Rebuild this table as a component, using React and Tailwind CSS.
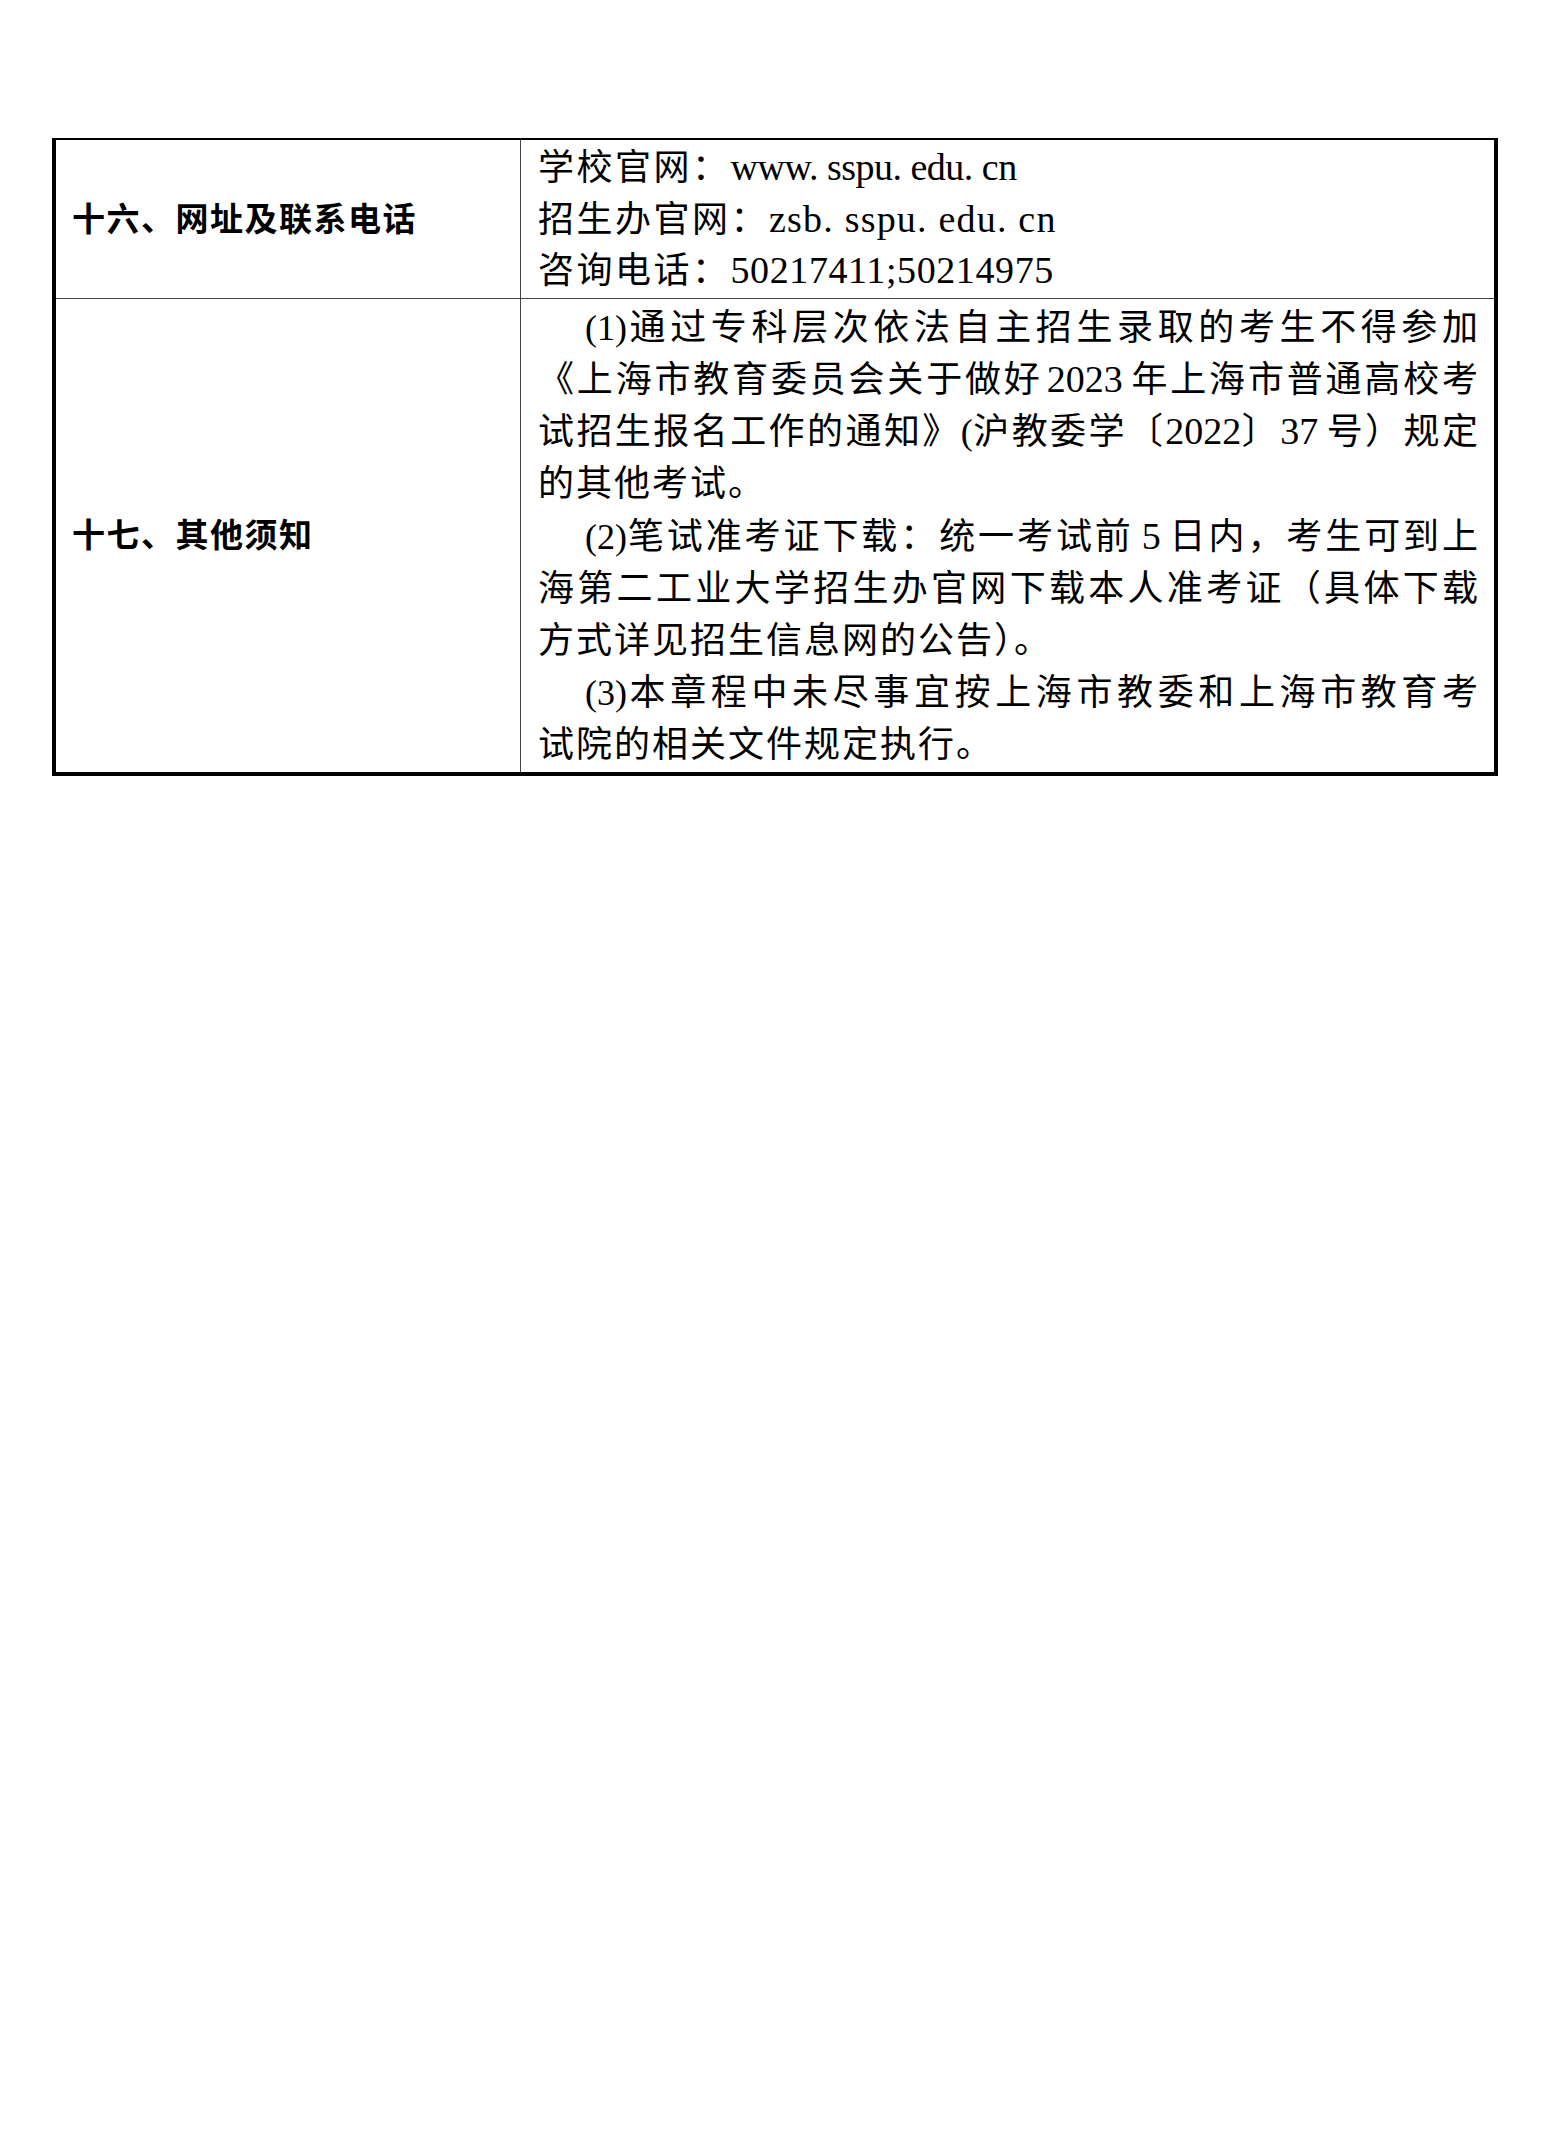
export default function App() {
  const full = "text-justify [text-align-last:justify]";
  const L = "text-[38px] leading-none";
  return (
    <div className="min-h-[2140px] w-[1551px] bg-white pt-[138px] pl-[52px] font-['Liberation_Serif','Noto_Sans_CJK_SC',serif] text-black">
      <div className="w-[1446px] border-t-2 border-l-4 border-r-4 border-b-4 border-black">
        <div className="flex border-b border-[#444]">
          <div className="w-[465px] shrink-0 border-r border-[#444] flex items-center pl-[16px] pt-[4px] text-[33px] font-bold tracking-[1.5px]">
            十六、网址及联系电话
          </div>
          <div className="flex-1 pl-[17px] pr-[14px] pt-[3px] text-[36px] leading-[51.6px]">
            <div>
              <span className="tracking-[2.5px]">学校官网：</span>
              <span className={`${L} tracking-[-0.5px]`}>www. sspu. edu. cn</span>
            </div>
            <div>
              <span className="tracking-[2.5px]">招生办官网：</span>
              <span className={`${L} tracking-[1.2px]`}>zsb. sspu. edu. cn</span>
            </div>
            <div>
              <span className="tracking-[2.5px]">咨询电话：</span>
              <span className={`${L} tracking-[0.6px]`}>50217411;50214975</span>
            </div>
          </div>
        </div>
        <div className="flex">
          <div className="w-[465px] shrink-0 border-r border-[#444] flex items-center pl-[16px] pt-[4px] text-[33px] font-bold tracking-[1.5px]">
            十七、其他须知
          </div>
          <div className="flex-1 pl-[17px] pr-[14px] pt-[3px] text-[36px] leading-[52.2px] tracking-[2px]">
            <div className={`${full} pl-[47px]`}>
              <span className="tracking-normal">(1)</span>通过专科层次依法自主招生录取的考生不得参加
            </div>
            <div className={full}>
              《上海市教育委员会关于做好<span className={`${L} tracking-normal ml-[4px] mr-[8px]`}>2023</span>年上海市普通高校考
            </div>
            <div className={full}>
              试招生报名工作的通知》<span className="tracking-normal">(</span>沪教委学〔<span className={`${L} tracking-normal`}>2022</span>〕<span className={`${L} tracking-normal mr-[8px]`}>37</span>号）规定
            </div>
            <div>的其他考试。</div>
            <div className={`${full} pl-[47px]`}>
              <span className="tracking-normal">(2)</span>笔试准考证下载：统一考试前<span className={`${L} tracking-normal mx-[8px]`}>5</span>日内，考生可到上
            </div>
            <div className={full}>海第二工业大学招生办官网下载本人准考证（具体下载</div>
            <div>方式详见招生信息网的公告）。</div>
            <div className={`${full} pl-[47px]`}>
              <span className="tracking-normal">(3)</span>本章程中未尽事宜按上海市教委和上海市教育考
            </div>
            <div>试院的相关文件规定执行。</div>
          </div>
        </div>
      </div>
    </div>
  );
}
